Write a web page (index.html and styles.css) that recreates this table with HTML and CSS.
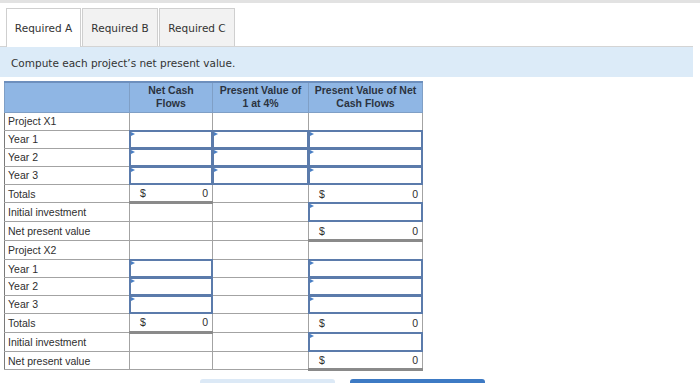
FILE: index.html
```html
<!DOCTYPE html>
<html>
<head>
  <title>Net Present Value</title>
  <link rel="stylesheet" href="styles.css">
</head>
<body>
  <div class="topbar"></div>

  <!-- Tabs -->
  <div class="tabs">
    <div class="tab active">Required A</div>
    <div class="tab">Required B</div>
    <div class="tab">Required C</div>
  </div>

  <div class="note">Compute each project&rsquo;s net present value.</div>

  <table class="npv">
    <colgroup>
      <col class="c-label">
      <col class="c-flow">
      <col class="c-pv">
      <col class="c-npv">
    </colgroup>
    <tr class="head">
      <th></th>
      <th>Net Cash<br>Flows</th>
      <th>Present Value of<br>1 at 4%</th>
      <th>Present Value of Net<br>Cash Flows</th>
    </tr>
    <!-- Project X1 -->
    <tr><td>Project X1</td><td></td><td></td><td></td></tr>
    <tr><td>Year 1</td><td class="in"><div class="box"></div></td><td class="in"><div class="box"></div></td><td class="in"><div class="box"></div></td></tr>
    <tr><td>Year 2</td><td class="in"><div class="box"></div></td><td class="in"><div class="box"></div></td><td class="in"><div class="box"></div></td></tr>
    <tr><td>Year 3</td><td class="in"><div class="box"></div></td><td class="in"><div class="box"></div></td><td class="in"><div class="box"></div></td></tr>
    <tr><td>Totals</td><td class="sum"><span>$</span><span>0</span></td><td></td><td class="amt"><span>$</span><span>0</span></td></tr>
    <tr><td>Initial investment</td><td></td><td></td><td class="in"><div class="box"></div></td></tr>
    <tr><td>Net present value</td><td></td><td></td><td class="sum"><span>$</span><span>0</span></td></tr>
    <!-- Project X2 -->
    <tr><td>Project X2</td><td></td><td></td><td></td></tr>
    <tr><td>Year 1</td><td class="in"><div class="box"></div></td><td></td><td class="in"><div class="box"></div></td></tr>
    <tr><td>Year 2</td><td class="in"><div class="box"></div></td><td></td><td class="in"><div class="box"></div></td></tr>
    <tr><td>Year 3</td><td class="in"><div class="box"></div></td><td></td><td class="in"><div class="box"></div></td></tr>
    <tr><td>Totals</td><td class="sum"><span>$</span><span>0</span></td><td></td><td class="amt"><span>$</span><span>0</span></td></tr>
    <tr><td>Initial investment</td><td></td><td></td><td class="in"><div class="box"></div></td></tr>
    <tr><td>Net present value</td><td></td><td></td><td class="sum"><span>$</span><span>0</span></td></tr>
  </table>

  <div class="nav">
    <div class="btn prev"></div>
    <div class="btn next"></div>
  </div>
</body>
</html>
```

FILE: styles.css
```css
body {
  margin: 0;
  font-family: "Liberation Sans", Arial, sans-serif;
  color: #333;
  background: #fff;
  overflow: hidden;
}
.topbar {
  height: 3px;
  background: #e2e2e2;
}
.tabs {
  display: flex;
  gap: 1px;
  padding: 5px 0 0 6px;
  margin-right: 7px;
  border-bottom: 1px solid #d4d4d4;
  font-family: "DejaVu Sans", Verdana, sans-serif;
  font-size: 10.5px;
}
.tab {
  width: 76px;
  height: 38px;
  line-height: 38px;
  text-align: center;
  background: #f2f2f2;
  border: 1px solid #cfcfcf;
  border-bottom: none;
  box-sizing: border-box;
  color: #333;
}
.tab.active {
  width: 75px;
  background: #fff;
  margin-bottom: -1px;
  height: 39px;
}
.note {
  background: #dcebf8;
  height: 30px;
  line-height: 32px;
  margin-right: 7px;
  padding-left: 11px;
  font-family: "DejaVu Sans", Verdana, sans-serif;
  font-size: 10.5px;
  color: #333;
}
.npv {
  margin: 4px 0 0 4px;
  border-collapse: collapse;
  table-layout: fixed;
  width: 418px;
  font-size: 10.5px;
}
.c-label { width: 125px; }
.c-flow { width: 83px; }
.c-pv { width: 96px; }
.c-npv { width: 114px; }
.npv td, .npv th {
  border: 1px solid #a3a3a3;
  padding: 0 3px;
  height: 16.9px;
  color: #2e2e2e;
}
.npv td:first-child {
  border-left-color: #7a7a7a;
}
.npv .head th {
  height: 28px;
  background: #8fb6e4;
  font-weight: bold;
  font-size: 10.5px;
  line-height: 13px;
  color: #2b3340;
  border-color: #7f9fc6;
  border-top: 2px solid #6d8fbd;
  vertical-align: top;
  padding-top: 1px;
}
.npv td.in {
  padding: 0;
  position: relative;
}
/* entry field laid over the cell edges */
.box {
  position: absolute;
  inset: -1px;
  border: 2px solid #5b7bab;
}
.box::before {
  content: "";
  position: absolute;
  left: 0;
  top: 0;
  border-left: 4px solid #4a7fc4;
  border-top: 2px solid transparent;
  border-bottom: 2px solid transparent;
}
.npv td.sum,
.npv td.amt {
  padding: 0 4px 0 10px;
}
.npv td.sum span:last-child,
.npv td.amt span:last-child {
  float: right;
}
.npv td.sum {
  border-bottom: 3px solid #8a8a8a;
}
.nav {
  display: flex;
  gap: 15px;
  padding: 8px 0 0 200px;
}
.btn {
  width: 135px;
  height: 20px;
  border-radius: 3px;
}
.btn.prev { background: #dce9f6; }
.btn.next { background: #3d7ac4; }
```
